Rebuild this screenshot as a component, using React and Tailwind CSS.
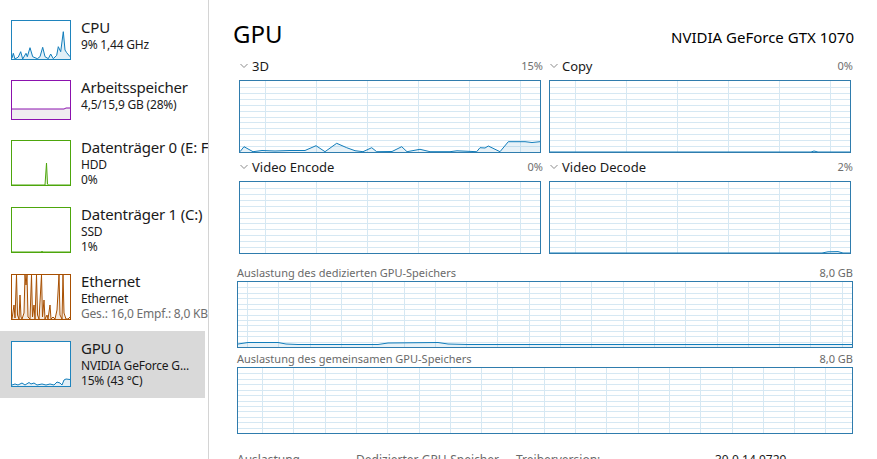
import React from "react";

const GRID = "#d6e8f3";

function ChartSvg({ w, h, vStart, vStep, hCount, points, stroke = "#117dbb", fill = "rgba(17,125,187,0.10)" }) {
  const vs = [];
  for (let x = vStart; x < w; x += vStep) vs.push(Math.round(x) + 0.5);
  const hs = [];
  for (let i = 1; i < hCount; i++) hs.push(Math.round((i * h) / hCount) + 0.5);
  const pts = points ? points.map((p) => p.join(",")).join(" ") : null;
  return (
    <svg width={w} height={h} viewBox={`0 0 ${w} ${h}`} className="block" shapeRendering="crispEdges">
      {hs.map((y) => (
        <line key={"h" + y} x1={0} x2={w} y1={y} y2={y} stroke={GRID} strokeWidth={1} />
      ))}
      {vs.map((x) => (
        <line key={"v" + x} x1={x} x2={x} y1={0} y2={h} stroke={GRID} strokeWidth={1} />
      ))}
      {pts && (
        <g shapeRendering="geometricPrecision">
          <polygon points={`0,${h} ${pts} ${w},${h}`} fill={fill} />
          <polyline points={pts} fill="none" stroke={stroke} strokeWidth={1} />
        </g>
      )}
    </svg>
  );
}

function ThumbSvg({ w, h, points, stroke, fill }) {
  const pts = points.map((p) => p.join(",")).join(" ");
  return (
    <svg width={w} height={h} viewBox={`0 0 ${w} ${h}`} className="block">
      <polygon points={`0,${h} ${pts} ${w},${h}`} fill={fill} />
      <polyline points={pts} fill="none" stroke={stroke} strokeWidth={1} />
    </svg>
  );
}

const cpuPts = [[0,37],[1.3,32.3],[3,38],[6.3,36],[8.7,30.7],[10.7,38],[14,32.3],[15.3,35.7],[18,26.7],[20.7,35.7],[25.3,37.7],[28,35.7],[30.7,26.3],[33,35.7],[36.3,37.7],[38.7,33],[41.3,37.7],[44.7,34.3],[46.3,25.7],[48.7,30.7],[51.3,10.7],[53,29],[54.7,31.7],[58,35.7]];
const memPts = [[0,28],[52,28],[54,27],[58,27]];
const disk0Pts = [[0,44],[33,44],[34.5,22],[35.5,43],[36.5,44],[58,44]];
const disk1Pts = [[0,44],[29,44],[30,43.3],[31,44],[58,44]];
const ethPts = [[0,44],[2,30],[3,43],[4.5,0],[5.5,40],[7,44],[8,20],[9,42],[10,44],[12,38],[13,0],[14,10],[15,0],[16,42],[18,44],[19.5,0],[20.5,42],[22,30],[23,44],[24.5,0],[25.5,40],[27,44],[29.5,0],[30.5,42],[32,25],[33,44],[35,40],[36,44],[38,30],[39,44],[41,42],[43,44],[45,35],[47,0],[48,40],[50,44],[51,0],[52,38],[54,44],[56,44],[58,42]];
const gpuThumbPts = [[0,43],[3,42],[6,43],[10,41],[13,43],[17,40.5],[19,42],[22,41],[25,43],[30,42],[34,43],[38,42],[42,43],[45,40],[48,41],[50,43],[52,38],[54,37],[58,37.5]];

const d3Pts = [[0,70.7],[4,65.7],[13,70.7],[22,69.5],[35,70],[50,69.5],[65,69.5],[76,64.7],[85,70.7],[96.7,62.3],[106.7,66.7],[115,69.7],[123,70.7],[131.7,66.7],[136.7,70.7],[152,70.5],[161.7,65.7],[167,70.7],[180,68.3],[190,70.7],[210,70.7],[217,69.8],[236.7,70.7],[240,66.7],[245,67],[248.3,65],[260,70.7],[268.3,60.7],[285,60.7],[292,61.5],[300,60.7]];
const copyPts = [[0,71],[261,71],[264,70],[268,71],[300,71]];
const decodePts = [[0,71],[272,71],[278,69.8],[288,69.6],[293,71],[300,71]];
const dedPts = [[0,62],[10,60.5],[40,60.5],[48,62],[60,62.5],[140,62.5],[150,61],[200,60.5],[210,62],[230,62.5],[614,62.5]];

function SideItem({ selected, thumb, title, lines }) {
  return (
    <div className={selected ? "flex w-[205px] py-[10px] pl-[11px] bg-[#d9d9d9]" : "flex w-[205px] py-[10px] pl-[11px]"}>
      {thumb}
      <div className="ml-[10px] -mt-[2px] whitespace-nowrap">
        <div className="text-[15px] leading-[19px] tracking-[-0.2px] text-[#1a1a1a]">{title}</div>
        {lines.map((l, i) => (
          <div key={i} className={l.gray ? "text-[12px] leading-[15px] tracking-[-0.2px] text-[#6e6e6e]" : "text-[12px] leading-[15px] tracking-[-0.2px] text-[#1a1a1a]"}>
            {l.t}
          </div>
        ))}
      </div>
    </div>
  );
}

function Chevron() {
  return (
    <svg width="8" height="6" viewBox="0 0 8 6" className="block">
      <polyline points="0.5,1 4,4.5 7.5,1" fill="none" stroke="#8a8a8a" strokeWidth="1" />
    </svg>
  );
}

function SmallChart({ label, value, points }) {
  return (
    <div className="flex flex-col w-[302px]">
      <div className="flex items-center justify-between h-[16px]">
        <div className="flex items-center">
          <div className="ml-[1px] mr-[4px]"><Chevron /></div>
          <span className="text-[13px] leading-[16px] text-[#1a1a1a]">{label}</span>
        </div>
        <span className="text-[11px] leading-[16px] text-[#6e6e6e] mr-[-2px]">{value}</span>
      </div>
      <div className="mt-[6px] w-[302px] h-[73px] border border-[#2f7cad] bg-white">
        <ChartSvg w={300} h={71} vStart={25} vStep={51} hCount={12} points={points} />
      </div>
    </div>
  );
}

export default function App() {
  return (
    <div className="flex w-[877px] h-[459px] overflow-hidden bg-white font-['Noto_Sans',sans-serif]">
      <div className="w-[209px] shrink-0 h-full border-r border-[#d4d4d4] overflow-hidden pt-[10px]">
        <SideItem
          thumb={<div className="w-[60px] h-[40px] border border-[#1f84bd] shrink-0"><ThumbSvg w={58} h={38} points={cpuPts} stroke="#117dbb" fill="rgba(17,125,187,0.12)" /></div>}
          title="CPU"
          lines={[{ t: "9% 1,44 GHz" }]}
        />
        <SideItem
          thumb={<div className="w-[60px] h-[40px] border border-[#8b12ae] shrink-0"><ThumbSvg w={58} h={38} points={memPts} stroke="#8b12ae" fill="#efedf0" /></div>}
          title="Arbeitsspeicher"
          lines={[{ t: "4,5/15,9 GB (28%)" }]}
        />
        <SideItem
          thumb={<div className="w-[60px] h-[46px] border border-[#4da60c] shrink-0"><ThumbSvg w={58} h={44} points={disk0Pts} stroke="#4da60c" fill="rgba(77,166,12,0.12)" /></div>}
          title="Datenträger 0 (E: F:)"
          lines={[{ t: "HDD" }, { t: "0%" }]}
        />
        <SideItem
          thumb={<div className="w-[60px] h-[46px] border border-[#4da60c] shrink-0"><ThumbSvg w={58} h={44} points={disk1Pts} stroke="#4da60c" fill="rgba(77,166,12,0.12)" /></div>}
          title="Datenträger 1 (C:)"
          lines={[{ t: "SSD" }, { t: "1%" }]}
        />
        <SideItem
          thumb={<div className="w-[60px] h-[46px] border border-[#a74f01] shrink-0"><ThumbSvg w={58} h={44} points={ethPts} stroke="#a74f01" fill="rgba(167,79,1,0.12)" /></div>}
          title="Ethernet"
          lines={[{ t: "Ethernet" }, { t: "Ges.: 16,0 Empf.: 8,0 KBit/s", gray: true }]}
        />
        <SideItem
          selected
          thumb={<div className="w-[60px] h-[46px] border border-[#1f84bd] bg-white shrink-0"><ThumbSvg w={58} h={44} points={gpuThumbPts} stroke="#117dbb" fill="rgba(17,125,187,0.12)" /></div>}
          title="GPU 0"
          lines={[{ t: "NVIDIA GeForce G..." }, { t: "15% (43 °C)" }]}
        />
      </div>

      <div className="flex-1 flex flex-col pl-[28px] pr-[24px] pt-[18px]">
        <div className="flex items-baseline justify-between ml-[-4px] mr-[-1px]">
          <span className="text-[24px] leading-[32px] text-black">GPU</span>
          <span className="text-[15px] leading-[20px] text-black">NVIDIA GeForce GTX 1070</span>
        </div>

        <div className="mt-[8px] flex gap-[8px] px-[2px]">
          <SmallChart label="3D" value="15%" points={d3Pts} />
          <SmallChart label="Copy" value="0%" points={copyPts} />
        </div>
        <div className="mt-[6px] flex gap-[8px] px-[2px]">
          <SmallChart label="Video Encode" value="0%" points={null} />
          <SmallChart label="Video Decode" value="2%" points={decodePts} />
        </div>

        <div className="mt-[12px] flex justify-between text-[11px] leading-[14px] text-[#6a6a6a]">
          <span>Auslastung des dedizierten GPU-Speichers</span>
          <span>8,0 GB</span>
        </div>
        <div className="mt-[1px] w-[616px] h-[67px] border border-[#2f7cad]">
          <ChartSvg w={614} h={65} vStart={9} vStep={31.3} hCount={12} points={dedPts} />
        </div>

        <div className="mt-[4px] flex justify-between text-[11px] leading-[14px] text-[#6a6a6a]">
          <span>Auslastung des gemeinsamen GPU-Speichers</span>
          <span>8,0 GB</span>
        </div>
        <div className="mt-[1px] w-[616px] h-[67px] border border-[#2f7cad]">
          <ChartSvg w={614} h={65} vStart={24} vStep={31.3} hCount={12} points={null} />
        </div>

        <div className="mt-[18px] flex text-[12px] leading-[16px] whitespace-nowrap">
          <span className="w-[119px] text-[#6a6a6a]">Auslastung</span>
          <span className="w-[160px] text-[#6a6a6a]">Dedizierter GPU-Speicher</span>
          <span className="w-[199px] text-[#6a6a6a]">Treiberversion:</span>
          <span className="text-[#1a1a1a]">30.0.14.9729</span>
        </div>
      </div>
    </div>
  );
}
